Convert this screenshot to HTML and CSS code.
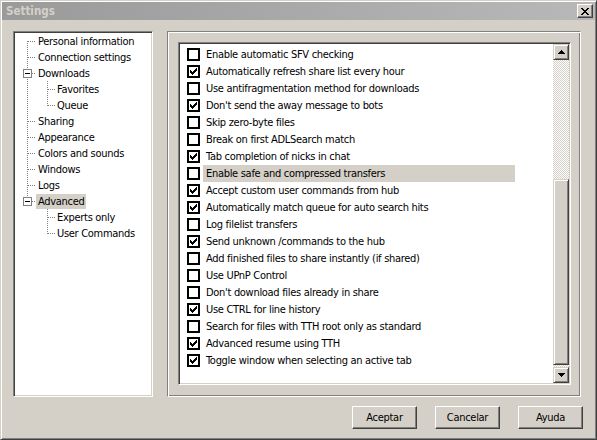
FILE: index.html
```html
<!DOCTYPE html>
<html>
<head>
<meta charset="utf-8">
<title>Settings</title>
<link rel="stylesheet" href="styles.css">
</head>
<body>
<svg class="defs" width="0" height="0">
  <symbol id="ck" viewBox="0 0 9 9">
    <path transform="translate(1,1)" d="M6 0h1v1h-1zM5 1h2v1h-2zM0 2h1v1h-1zM4 2h3v1h-3zM0 3h2v1h-2zM3 3h3v1h-3zM0 4h5v1h-5zM1 5h3v1h-3zM2 6h1v1h-1z" fill="#000"/>
  </symbol>
  <symbol id="minus" viewBox="0 0 9 9">
    <rect x="0.5" y="0.5" width="8" height="8" fill="#fff" stroke="#808080"/>
    <path d="M2 4h5v1H2z" fill="#000"/>
  </symbol>
</svg>
<div class="window">
  <div class="titlebar">
    <span class="title">Settings</span>
    <span class="close"><svg width="8" height="7" viewBox="0 0 8 7"><path d="M0 0h2v1h-2zM6 0h2v1h-2zM1 1h2v1h-2zM5 1h2v1h-2zM2 2h4v1h-4zM3 3h2v1h-2zM2 4h4v1h-4zM1 5h2v1h-2zM5 5h2v1h-2zM0 6h2v1h-2zM6 6h2v1h-2z" fill="#000"/></svg></span>
  </div>
  <div class="main">
    <div class="tree">
      <div class="node"><span class="branch b-first"></span><span class="tlabel">Personal information</span></div>
      <div class="node"><span class="branch b-mid"></span><span class="tlabel">Connection settings</span></div>
      <div class="node"><span class="branch b-open"><svg class="exp" width="9" height="9"><use href="#minus"/></svg></span><span class="tlabel">Downloads</span></div>
      <div class="node"><span class="branch c b-cmid-r"></span><span class="tlabel">Favorites</span></div>
      <div class="node"><span class="branch c b-clast-r"></span><span class="tlabel">Queue</span></div>
      <div class="node"><span class="branch b-mid"></span><span class="tlabel">Sharing</span></div>
      <div class="node"><span class="branch b-mid"></span><span class="tlabel">Appearance</span></div>
      <div class="node"><span class="branch b-mid"></span><span class="tlabel">Colors and sounds</span></div>
      <div class="node"><span class="branch b-mid"></span><span class="tlabel">Windows</span></div>
      <div class="node"><span class="branch b-mid"></span><span class="tlabel">Logs</span></div>
      <div class="node"><span class="branch b-lastopen"><svg class="exp" width="9" height="9"><use href="#minus"/></svg></span><span class="tlabel sel">Advanced</span></div>
      <div class="node"><span class="branch c b-cmid"></span><span class="tlabel">Experts only</span></div>
      <div class="node"><span class="branch c b-clast"></span><span class="tlabel">User Commands</span></div>
    </div>
    <div class="frame">
      <div class="listbox">
        <div class="list">
          <div class="row"><span class="cb"></span><span class="label">Enable automatic SFV checking</span></div>
          <div class="row"><span class="cb"><svg width="9" height="9"><use href="#ck"/></svg></span><span class="label">Automatically refresh share list every hour</span></div>
          <div class="row"><span class="cb"></span><span class="label">Use antifragmentation method for downloads</span></div>
          <div class="row"><span class="cb"><svg width="9" height="9"><use href="#ck"/></svg></span><span class="label">Don't send the away message to bots</span></div>
          <div class="row"><span class="cb"></span><span class="label">Skip zero-byte files</span></div>
          <div class="row"><span class="cb"></span><span class="label">Break on first ADLSearch match</span></div>
          <div class="row"><span class="cb"><svg width="9" height="9"><use href="#ck"/></svg></span><span class="label">Tab completion of nicks in chat</span></div>
          <div class="row"><span class="cb"></span><span class="label sel">Enable safe and compressed transfers</span></div>
          <div class="row"><span class="cb"><svg width="9" height="9"><use href="#ck"/></svg></span><span class="label">Accept custom user commands from hub</span></div>
          <div class="row"><span class="cb"><svg width="9" height="9"><use href="#ck"/></svg></span><span class="label">Automatically match queue for auto search hits</span></div>
          <div class="row"><span class="cb"></span><span class="label">Log filelist transfers</span></div>
          <div class="row"><span class="cb"><svg width="9" height="9"><use href="#ck"/></svg></span><span class="label">Send unknown /commands to the hub</span></div>
          <div class="row"><span class="cb"></span><span class="label">Add finished files to share instantly (if shared)</span></div>
          <div class="row"><span class="cb"></span><span class="label">Use UPnP Control</span></div>
          <div class="row"><span class="cb"></span><span class="label">Don't download files already in share</span></div>
          <div class="row"><span class="cb"><svg width="9" height="9"><use href="#ck"/></svg></span><span class="label">Use CTRL for line history</span></div>
          <div class="row"><span class="cb"></span><span class="label">Search for files with TTH root only as standard</span></div>
          <div class="row"><span class="cb"><svg width="9" height="9"><use href="#ck"/></svg></span><span class="label">Advanced resume using TTH</span></div>
          <div class="row"><span class="cb"><svg width="9" height="9"><use href="#ck"/></svg></span><span class="label">Toggle window when selecting an active tab</span></div>
        </div>
        <div class="scrollbar">
          <div class="sbtn"><svg width="7" height="4" viewBox="0 0 7 4"><path d="M3 0h1v1h1v1h1v1h1v1H0V3h1V2h1V1h1z" fill="#000"/></svg></div>
          <div class="track"><div class="thumb"></div></div>
          <div class="sbtn"><svg width="7" height="4" viewBox="0 0 7 4"><path d="M0 0h7v1h-1v1h-1v1h-1v1h-1v-1h-1v-1h-1v-1h-1z" fill="#000"/></svg></div>
        </div>
      </div>
    </div>
  </div>
  <div class="footer">
    <button class="btn">Aceptar</button>
    <button class="btn">Cancelar</button>
    <button class="btn">Ayuda</button>
  </div>
</div>
</body>
</html>
```

FILE: styles.css
```css
* { box-sizing: border-box; }

:root {
  --v: repeating-linear-gradient(#808080 0 1px, transparent 1px 2px);
  --h: repeating-linear-gradient(90deg, #808080 0 1px, transparent 1px 2px);
}

body {
  margin: 0;
  background: #d4d0c8;
  font-family: "DejaVu Sans Condensed", "DejaVu Sans", sans-serif;
  font-size: 11px;
  letter-spacing: -0.3px;
  color: #000;
}

.defs { position: absolute; width: 0; height: 0; overflow: hidden; }

.window {
  width: 597px;
  height: 440px;
  border: 1px solid;
  border-color: #d4d0c8 #404040 #404040 #d4d0c8;
  box-shadow: inset 1px 1px #fff, inset -1px -1px #808080;
  padding: 1px;
  display: flex;
  flex-direction: column;
  background: #d4d0c8;
}

.titlebar {
  height: 18px;
  background: linear-gradient(90deg, #9a9a9a, #b8b8b8);
  display: flex;
  align-items: center;
  justify-content: space-between;
  padding: 0 2px 0 4px;
}

.title {
  font-weight: bold;
  color: #d4d0c8;
  font-size: 11.5px;
  letter-spacing: 0;
}

.close {
  width: 16px;
  height: 14px;
  background: #d4d0c8;
  border: 1px solid;
  border-color: #fff #404040 #404040 #fff;
  box-shadow: inset -1px -1px #808080;
  display: flex;
  align-items: center;
  justify-content: center;
  padding-right: 1px;
}
.close svg { display: block; }

.main {
  display: flex;
  gap: 14px;
  margin: 11px 0 0 11px;
  height: 366px;
}

.tree {
  width: 140px;
  background: #fff;
  border: 1px solid;
  border-color: #808080 #fff #fff #808080;
  box-shadow: inset 1px 1px #404040, inset -1px -1px #d4d0c8;
  padding: 1px;
}

.node {
  height: 16px;
  display: flex;
  align-items: center;
  white-space: nowrap;
}

.branch {
  flex: none;
  width: 21px;
  height: 16px;
  background-repeat: no-repeat;
  padding: 4px 0 0 8px;
}
.branch.c { width: 40px; }
.exp { display: block; }

.b-first {
  background-image: var(--v), var(--h);
  background-size: 1px 8px, 8px 1px;
  background-position: 12px 8px, 13px 8px;
}
.b-mid {
  background-image: var(--v), var(--h);
  background-size: 1px 16px, 8px 1px;
  background-position: 12px 0, 13px 8px;
}
.b-open {
  background-image: var(--v), var(--h);
  background-size: 1px 16px, 4px 1px;
  background-position: 12px 0, 17px 8px;
}
.b-lastopen {
  background-image: var(--v), var(--h);
  background-size: 1px 8px, 4px 1px;
  background-position: 12px 0, 17px 8px;
}
.b-cmid-r {
  background-image: var(--v), var(--v), var(--h);
  background-size: 1px 16px, 1px 16px, 8px 1px;
  background-position: 12px 0, 32px 0, 33px 8px;
}
.b-clast-r {
  background-image: var(--v), var(--v), var(--h);
  background-size: 1px 16px, 1px 9px, 8px 1px;
  background-position: 12px 0, 32px 0, 33px 8px;
}
.b-cmid {
  background-image: var(--v), var(--h);
  background-size: 1px 16px, 8px 1px;
  background-position: 32px 0, 33px 8px;
}
.b-clast {
  background-image: var(--v), var(--h);
  background-size: 1px 9px, 8px 1px;
  background-position: 32px 0, 33px 8px;
}

.tlabel {
  padding: 1px 2px 0;
  line-height: 14px;
  height: 15px;
}
.tlabel.sel { background: #d4d0c8; }

.frame {
  width: 414px;
  border: 1px solid;
  border-color: #808080 #fff #fff #808080;
  box-shadow: inset 1px 1px #fff, inset -1px -1px #808080;
  padding: 10px 9px 11px 10px;
  display: flex;
}

.listbox {
  flex: 1;
  display: flex;
  background: #fff;
  border: 1px solid;
  border-color: #808080 #fff #fff #808080;
  box-shadow: inset 1px 1px #404040, inset -1px -1px #d4d0c8;
  padding: 1px;
}

.list {
  flex: 1;
  padding-top: 2px;
}

.row {
  height: 17px;
  display: flex;
  align-items: center;
  padding-left: 7px;
  white-space: nowrap;
}

.cb {
  flex: none;
  width: 13px;
  height: 13px;
  border: 2px solid #000;
  background: #fff;
  margin-right: 3px;
}
.cb svg { display: block; }

.label {
  width: 312px;
  height: 17px;
  line-height: 17px;
  padding-left: 3px;
  overflow: hidden;
}
.label.sel { background: #d4d0c8; }

.scrollbar {
  width: 16px;
  display: flex;
  flex-direction: column;
}

.sbtn, .thumb {
  background: #d4d0c8;
  border: 1px solid;
  border-color: #d4d0c8 #404040 #404040 #d4d0c8;
  box-shadow: inset 1px 1px #fff, inset -1px -1px #808080;
}
.sbtn {
  height: 16px;
  display: flex;
  align-items: center;
  justify-content: center;
}
.sbtn svg { display: block; }

.track {
  flex: 1;
  background-image: conic-gradient(#d4d0c8 25%, #fff 0 50%, #d4d0c8 0 75%, #fff 0);
  background-size: 2px 2px;
  display: flex;
  flex-direction: column;
}
.thumb {
  margin-top: 119px;
  height: 186px;
}

.footer {
  display: flex;
  justify-content: flex-end;
  gap: 18px;
  margin-top: 9px;
  padding-right: 12px;
}

.btn {
  width: 65px;
  height: 23px;
  background: #d4d0c8;
  font-family: "DejaVu Sans Condensed", "DejaVu Sans", sans-serif;
  font-size: 11px;
  letter-spacing: -0.3px;
  color: #000;
  border: 1px solid;
  border-color: #fff #404040 #404040 #fff;
  box-shadow: inset -1px -1px #808080;
  padding: 0;
  margin: 0;
}
```
